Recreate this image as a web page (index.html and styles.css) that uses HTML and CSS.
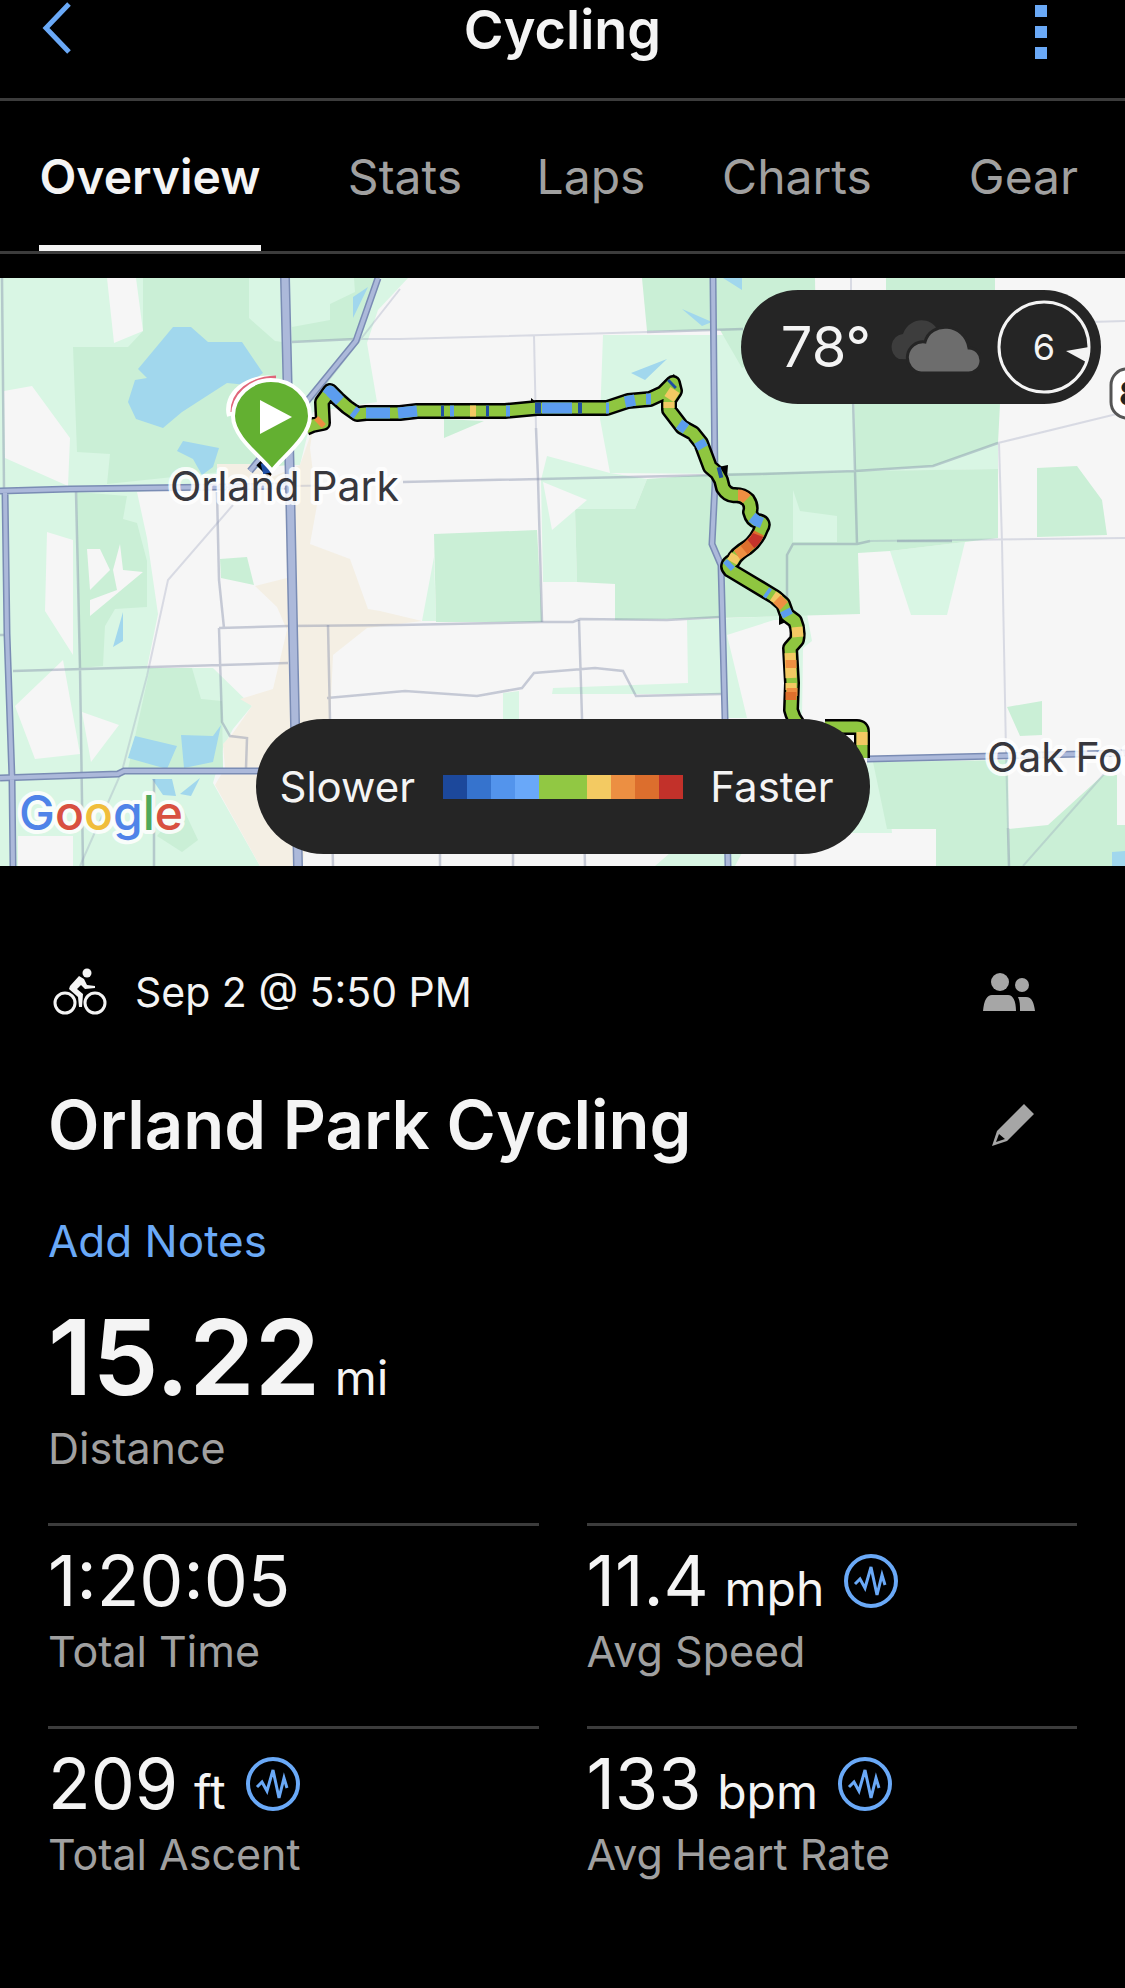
FILE: index.html
```
<!DOCTYPE html>
<html lang="en">
<head>
  <meta charset="UTF-8" />
  <meta name="viewport" content="width=device-width, initial-scale=1.0"/>
  <title>Cycling</title>
  <link rel="stylesheet" href="styles.css">
</head>
<body>

  <header class="topbar">
    <button class="icon-btn back" aria-label="Back">
      <svg width="30" height="52" viewBox="0 0 30 52"><path d="M27 2 4 26 27 50" fill="none" stroke="#6aa9f7" stroke-width="5"/></svg>
    </button>
    <h1>Cycling</h1>
    <button class="icon-btn more" aria-label="More">
      <svg width="12" height="54" viewBox="0 0 12 54" fill="#6aa9f7"><path d="M0 0h12v12H0zM0 21h12v12H0zM0 42h12v12H0z"/></svg>
    </button>
  </header>

  <nav class="tabs">
    <a href="#overview" class="active">Overview</a>
    <a href="#stats">Stats</a>
    <a href="#laps">Laps</a>
    <a href="#charts">Charts</a>
    <a href="#gear">Gear</a>
  </nav>

  <section class="map">
    <svg class="map-canvas" viewBox="0 0 1125 588" preserveAspectRatio="xMidYMid slice">
      <defs>
        <path id="ride" d="M306 150 313 147 323 145 322 124 330 113 338 121 347 129 357 136 366 135 400 135 417 133 447 133 505 133 537 130 580 130 607 130 628 123 650 121 663 115 673 105 675 113 669 122 669 132 682 149 693 155 701 165 710 189 717 195 721 202 723 210Q728 218 735 217 743 217 748 222 752 228 750 234 752 242 757 243 766 244 761 251 757 262 748 269 736 276 733 283 725 287 730 292L775 319 783 326 787 337 795 343Q799 352 797 362L790 370 792 405 791 432Q793 440 798 446M825 449H857Q862 449 862 454V480"/>
        <path id="highways" d="M378 0 356 63 250 193M0 213 70 211 290 208M5 213 7 356 12 501 13 588M0 500 118 496 124 493 257 493H290M867 481 1125 475M713 0 715 206 712 266 721 287 725 440 728 588"/>
      </defs>
      <!-- parks, light -->
      <g fill="#d9f6e4">
        <path d="M0 0H408L378 32 367 65 377 124 313 134 300 187 217 189 217 206 137 214 147 260 158 336 147 390H213L252 428 233 451 223 470 213 505 260 588H0z"/>
        <path d="M603 57 815 57 998 90V191L735 196 610 195 600 141z"/>
        <path d="M547 178 610 195 647 201 635 231H575L577 304H543L541 202z"/>
        <path d="M434 279 422 343H436z"/>
        <path d="M687 342 780 338 807 336 812 363 803 370 802 440H796L794 342H774L727 357 747 440H725L722 416H552L553 410 688 405z"/>
        <path d="M503 415 519 413V441H503zM867 484H885L892 555H850zM655 588 670 575H742L735 588z"/>
        <path d="M890 273 965 264 947 337H911z"/>
      </g>
      <!-- parks, dark -->
      <g fill="#caefd6">
        <path d="M143 0H249V40L275 63 290 65 287 187 107 206 110 176 77 174 73 69H128L143 53z"/>
        <path d="M354 0H378L353 61 292 63V49L330 42V26L355 14z"/>
        <path d="M77 214 127 218 123 241 137 245 147 283V329L115 331 105 348 103 388 79 390z"/>
        <path d="M150 390H192L201 421 222 423 223 490 128 491zM157 558 182 528 198 562 182 574zM220 281 247 279 254 307 221 300z"/>
        <path d="M642 0H815L816 60 742 90 720 52 647 53zM886 0H995V60H886zM855 126H1000L998 165 933 188 855 193z"/>
        <path d="M647 201 730 195 998 191V260L965 264 890 273 858 275 860 336 720 340 615 342V306L577 304 575 231H635z"/>
        <path d="M1037 190 1077 188 1102 222 1107 257 1037 259zM434 256 537 252 542 344H436zM444 141 484 143 444 160z"/>
        <path d="M1007 429 1042 423V457L1020 458zM873 484 1008 482 1009 588H936V551H887zM1103 497H1117V547H1125V588H1009V551L1048 547z"/>
      </g>
      <path d="M793 212 800 233 837 238V264H793z" fill="#d9f6e4"/>
      <!-- built-up blocks -->
      <g fill="#f6f6f6">
        <path d="M107 0H136L143 53 114 65zM4 113 32 108 70 160 68 208 5 180zM47 254 73 262V377L45 333zM15 428 63 382 80 476 35 481zM82 434 119 447 91 484zM18 558H73V588H18z"/>
        <path d="M87 271H100L110 292 90 312zM113 292 120 266 123 292 143 294 90 338V322L117 312zM543 204 587 222 552 252zM543 305 615 307V341H543z"/>
      </g>
      <path d="M217 186 250 186 270 200 300 187 313 150 310 170 317 227 310 266 350 281 368 331 380 333 422 343 367 350 333 377 330 443 302 588H260L215 507 225 490 223 466 233 455 252 428 240 421 273 411 287 352 277 329 255 308 287 300 285 206 217 206z" fill="#f4efe4"/>
      <!-- water -->
      <g fill="#a1d7ed">
        <path d="M173 49H191L208 64H242L263 95 247 107 227 105 182 134 163 150 136 141 128 124 135 102 147 100 138 91z"/>
        <path d="M183 163 219 170 213 189 202 197 193 181 177 173zM353 19 368 9 353 40zM123 334V363L113 369z"/>
        <path d="M135 458 177 468 167 491 128 480zM181 457 213 458 221 447 213 484 184 490zM152 501H172L176 518 163 517zM200 500 191 518 180 516z"/>
        <path d="M682 31 712 44 702 48zM631 95 667 81 645 102zM723 0H742V12zM1112 574 1125 573V588H1112z"/>
      </g>
      <!-- minor roads -->
      <g fill="none" stroke="#7d86a5" stroke-opacity=".4" stroke-width="2.5">
        <path d="M76 214 80 390 83 588M217 214 219 302 224 350M0 357H8M219 350 288 348 400 347 542 344 573 344 580 341 667 342 720 339M13 393 288 385M219 350 222 444 230 458 247 460 246 490"/>
        <path d="M328 347 330 442 333 588M327 420 405 413 477 418 522 410 534 395 595 390 623 393 636 418 722 416M579 342 582 440 585 588M536 150 538 201 542 344"/>
        <path d="M403 204 760 196 855 193 933 188 998 165M853 120 857 266H793L787 277V336M857 266 870 263M897 263H952M647 54 743 51M292 64 355 61M154 501V588M440 570V588M513 570V588M795 570V588M2 0 4 210M1008 550 1009 588"/>
      </g>
      <g fill="none" stroke="#8d92b5" stroke-opacity=".28" stroke-width="2">
        <path d="M355 61 400 61 647 54M534 58 536 150M400 11 313 122M233 227 168 302 147 398 122 493 80 588M998 165 1125 134M870 263 1125 260M999 165 1002 264 1006 474 1008 550M1105 495 1023 588M851 0V14M1090 44 1125 43M290 208 360 207"/>
      </g>
      <!-- highways: dark casing, light fill -->
      <use href="#highways" class="hw-case"/>
      <use href="#highways" class="hw-fill"/>
      <path class="hw-case wide" d="M285 0 290 206 298 588"/>
      <path class="hw-fill wide" d="M285 0 290 206 298 588"/>
      <!-- ride track -->
      <use href="#ride" class="track-case"/>
      <path class="track-case" d="M262 193 267 188 274 192"/>
      <path d="M664 103 674 96 679 106zM531 120 536 124 543 122V130H531zM718 189 728 187 727 200zM779 334V347L786 344z"/>
      <use href="#ride" class="track" stroke="#8fc640"/>
      <g class="track">
        <path stroke="#5c9def" d="M327 117 330 113 340 123M353 133 357 136M366 135H390M398 135 417 133M450 133H454M506 133H510M542 130H572M606 130H609M625 124 635 122M646 121H651M679 146 686 151M699 163 703 170M752 239 757 243 762 245M731 285 727 289M766 314 769 316M785 332 788 338"/>
        <path stroke="#1f4fa3" d="M262 191 270 189M441 133H444M486 133H489M535 130H541M578 130H582M671 107 673 105M718 195 722 194"/>
        <path stroke="#f3c963" d="M470 133H476M675 112 669 121M669 124V130M736 277 732 284M773 318 779 322M797 349 798 359M790 375 791 400M791 405V412M862 454V467"/>
        <path stroke="#ee8f42" d="M318 146 322 142M738 217Q743 217 747 221M747 270 737 277M777 321 784 328M791 382V390M792 410V418"/>
        <path stroke="#dd6f2d" d="M759 255Q755 263 744 272M791 414V422"/>
        <path stroke="#c5332b" d="M758 257Q756 262 751 266"/>
      </g>
      <!-- start pin -->
      <path d="M230 138C224 116 248 98 274 101" fill="none" stroke="#fff" stroke-width="6"/>
      <path d="M232 134C232 114 250 100 276 99" fill="none" stroke="#e0667a" stroke-width="3"/>
      <path d="M272 193C263 180 233 160 233 138C233 118 251 102 271 102C292 102 310 118 310 138C310 160 281 180 272 193z" fill="#63b031" stroke="#fff" stroke-width="4"/>
      <path d="M260 122V156L292 139z" fill="#fff"/>
      <!-- place names -->
      <text class="place" x="170" y="223">Orland Park</text>
      <text class="place" x="987" y="494">Oak Forest</text>
      <rect x="1111" y="91" width="60" height="49" rx="16" fill="#fff" stroke="#555" stroke-width="3"/>
      <text class="shield" x="1119" y="128">83</text>
      <text class="google" x="19" y="552"><tspan fill="#4f83e8">G</tspan><tspan fill="#d85040">o</tspan><tspan fill="#f0bd3b">o</tspan><tspan fill="#4f83e8">g</tspan><tspan fill="#4fa85a">l</tspan><tspan fill="#d85040">e</tspan></text>
    </svg>

    <div class="weather">
      <span class="temp">78°</span>
      <svg width="94" height="54" viewBox="0 0 94 54">
        <path d="M12 39A12 13 0 0 1 16 14C22-3 43-4 50 9L40 40z" fill="#3d3d3d"/>
        <path d="M34 53A15.500 15.500 0 1 1 38 22C43 1 78 2 82 28A12.500 12.500 0 0 1 81 53z" fill="#6d6d6d" stroke="#252525" stroke-width="3"/>
      </svg>
      <svg width="94" height="94" viewBox="0 0 94 94">
        <circle cx="47" cy="47" r="45" fill="none" stroke="#f4f4f4" stroke-width="3"/>
        <path d="M69 51 92 47 89 62z" fill="#f4f4f4"/>
        <text class="wind" x="47" y="60" text-anchor="middle">6</text>
      </svg>
    </div>

    <div class="legend">
      <span>Slower</span>
      <div class="scale">
        <i class="s1"></i><i class="s2"></i><i class="s3"></i><i class="s4"></i><i class="s5"></i><i class="s5"></i><i class="s6"></i><i class="s7"></i><i class="s8"></i><i class="s9"></i>
      </div>
      <span>Faster</span>
    </div>
  </section>

  <main class="details" id="overview">
    <div class="row when">
      <svg width="54" height="48" viewBox="0 0 54 48">
        <g fill="none" stroke="#f4f4f4" stroke-width="3"><circle cx="12" cy="35" r="10"/><circle cx="42" cy="35" r="10"/></g>
        <circle cx="34" cy="5" r="4.500" fill="#f4f4f4"/>
        <path d="M26 8 31 11 34 17 42 18V20L32 21 28 17 24 21 30 26 29 39H26L25 29 16 21 17 18z" fill="#f4f4f4"/>
      </svg>
      <span class="date">Sep 2 @ 5:50 PM</span>
      <button class="icon-btn" aria-label="Privacy">
        <svg width="52" height="40" viewBox="0 0 52 40" fill="#a6a6a6">
          <circle cx="17" cy="10" r="9"/><circle cx="39" cy="13" r="7"/>
          <path d="M0 39C1 28 4 23 9 23H25C30 23 33 29 33 39zM35 25H43C49 25 51 31 52 39H37C37 33 37 29 35 25z"/>
        </svg>
      </button>
    </div>

    <div class="row title">
      <h2>Orland Park Cycling</h2>
      <button class="icon-btn" aria-label="Edit name">
        <svg width="44" height="44" viewBox="0 0 44 44"><path d="M33 1 43 11 16 38 1 43 6 28zM8 31 5 39 14 36z" fill="#a6a6a6" fill-rule="evenodd"/></svg>
      </button>
    </div>

    <a class="notes" href="#notes">Add Notes</a>

    <div class="distance">
      <p class="big">15.22 <small>mi</small></p>
      <p class="label">Distance</p>
    </div>

    <div class="stats" id="stats">
      <div class="stat">
        <p class="value">1:20:05</p>
        <p class="label">Total Time</p>
      </div>
      <div class="stat">
        <p class="value">
          <span>11.4 <small>mph</small></span>
          <button class="icon-btn" aria-label="Speed chart">
            <svg class="pulse" viewBox="0 0 54 54"><circle cx="27" cy="27" r="25"/><path d="M11 30 16 25 21 34 27 13 33 41 38 21 41 31"/></svg>
          </button>
        </p>
        <p class="label">Avg Speed</p>
      </div>
      <div class="stat">
        <p class="value">
          <span>209 <small>ft</small></span>
          <button class="icon-btn" aria-label="Elevation chart">
            <svg class="pulse" viewBox="0 0 54 54"><circle cx="27" cy="27" r="25"/><path d="M11 30 16 25 21 34 27 13 33 41 38 21 41 31"/></svg>
          </button>
        </p>
        <p class="label">Total Ascent</p>
      </div>
      <div class="stat">
        <p class="value">
          <span>133 <small>bpm</small></span>
          <button class="icon-btn" aria-label="Heart rate chart">
            <svg class="pulse" viewBox="0 0 54 54"><circle cx="27" cy="27" r="25"/><path d="M11 30 16 25 21 34 27 13 33 41 38 21 41 31"/></svg>
          </button>
        </p>
        <p class="label">Avg Heart Rate</p>
      </div>
    </div>
  </main>

</body>
</html>
```
FILE: styles.css
```
* {
  box-sizing: border-box;
}

body {
  margin: 0;
  min-height: 100vh;
  background: #000;
  color: #f4f4f4;
  font-family: Inter, Roboto, sans-serif;
}

h1, h2, p {
  margin: 0;
}

.icon-btn {
  display: flex;
  background: none;
  border: none;
  padding: 0;
  cursor: pointer;
}

/* top bar */
.topbar {
  display: grid;
  grid-template-columns: 1fr auto 1fr;
  padding: 0 78px 38px 42px;
  border-bottom: 3px solid #3c3c3c;
}

.topbar h1 {
  font-size: 54px;
  font-weight: 600;
  line-height: 60px;
  padding-left: 36px;
}

.back {
  padding-top: 2px;
}

.more {
  justify-self: end;
  padding-top: 5px;
}

/* tabs */
.tabs {
  display: grid;
  grid-template-columns: 300fr 210fr 162fr 250fr 203fr;
  justify-items: center;
  border-bottom: 3px solid #3c3c3c;
}

.tabs a {
  padding-top: 2px;
  color: #a0a0a0;
  font-size: 48px;
  line-height: 148px;
  text-decoration: none;
}

.tabs .active {
  color: #f4f4f4;
  font-weight: 600;
  box-shadow: inset 0 -6px #f4f4f4;
}

/* map */
.map {
  position: relative;
  margin-top: 24px;
  height: 588px;
  background: #f6f6f6;
  overflow: hidden;
}

.map-canvas {
  display: block;
  width: 100%;
  height: 100%;
}

.hw-case, .hw-fill, .track, .track-case {
  fill: none;
}

.hw-case {
  stroke: #7a8cb4;
  stroke-width: 7px;
}

.hw-fill {
  stroke: #acb9da;
  stroke-width: 4px;
}

.hw-case.wide {
  stroke-width: 10px;
}

.hw-fill.wide {
  stroke-width: 7px;
}

.track-case {
  stroke: #000;
  stroke-width: 16px;
  stroke-linejoin: round;
}

.track {
  stroke-width: 11px;
  stroke-linejoin: round;
}

.place, .google {
  paint-order: stroke;
  stroke: #fff;
  stroke-opacity: .85;
  stroke-width: 8px;
  stroke-linejoin: round;
}

.place {
  font-size: 41px;
  fill: #37373d;
}

.google {
  font-size: 48px;
  font-weight: 500;
}

.shield {
  font-size: 34px;
  font-weight: 700;
  fill: #222;
}

.weather {
  position: absolute;
  top: 12px;
  right: 24px;
  display: flex;
  align-items: center;
  gap: 16px;
  height: 114px;
  padding: 0 10px 0 40px;
  border-radius: 57px;
  background: #252525;
}

.temp {
  font-size: 56px;
}

.wind {
  font-size: 36px;
  fill: #f4f4f4;
}

.legend {
  position: absolute;
  left: 50%;
  bottom: 12px;
  transform: translateX(-50%);
  display: flex;
  align-items: center;
  justify-content: space-between;
  width: 614px;
  height: 135px;
  padding: 0 36px 0 24px;
  border-radius: 68px;
  background: #252525;
  font-size: 42px;
}

.scale {
  display: flex;
}

.scale i {
  width: 24px;
  height: 24px;
}

.s1 { background: #1c489b; }
.s2 { background: #3673cd; }
.s3 { background: #5394ec; }
.s4 { background: #69a8f9; }
.s5 { background: #91c843; }
.s6 { background: #f3ca62; }
.s7 { background: #ec8f42; }
.s8 { background: #dc6e2d; }
.s9 { background: #c2312a; }

/* activity details */
.details {
  padding: 96px 48px 60px;
}

.row {
  display: flex;
  align-items: center;
}

.row .icon-btn {
  margin-left: auto;
  margin-right: 42px;
}

.when {
  gap: 28px;
  padding-left: 5px;
  font-size: 41px;
  line-height: 60px;
}

.title {
  margin: 63px 0 46px;
}

.title h2 {
  font-size: 67px;
  font-weight: 600;
  line-height: 80px;
}

.notes {
  display: block;
  color: #6aa9f7;
  font-size: 44px;
  line-height: 60px;
  text-decoration: none;
}

.big {
  margin: 31px 0 6px;
  font-size: 105px;
  font-weight: 600;
  line-height: 110px;
}

small {
  font-size: 48px;
  font-weight: 400;
  line-height: 1;
}

.big small {
  margin-left: -12px;
}

.label {
  color: #a0a0a0;
  font-size: 43px;
  line-height: 60px;
}

.stats {
  display: grid;
  grid-template-columns: 1fr 1fr;
  gap: 45px 48px;
  margin-top: 45px;
}

.stat {
  border-top: 3px solid #3c3c3c;
  padding-top: 15px;
}

.value {
  display: flex;
  align-items: center;
  gap: 20px;
  font-size: 70px;
  line-height: 80px;
}

.value small {
  margin-left: -4px;
}

.pulse {
  width: 54px;
  height: 54px;
  fill: none;
  stroke: #6aa9f7;
  stroke-width: 4px;
}

.pulse path {
  stroke-width: 3px;
}
```
